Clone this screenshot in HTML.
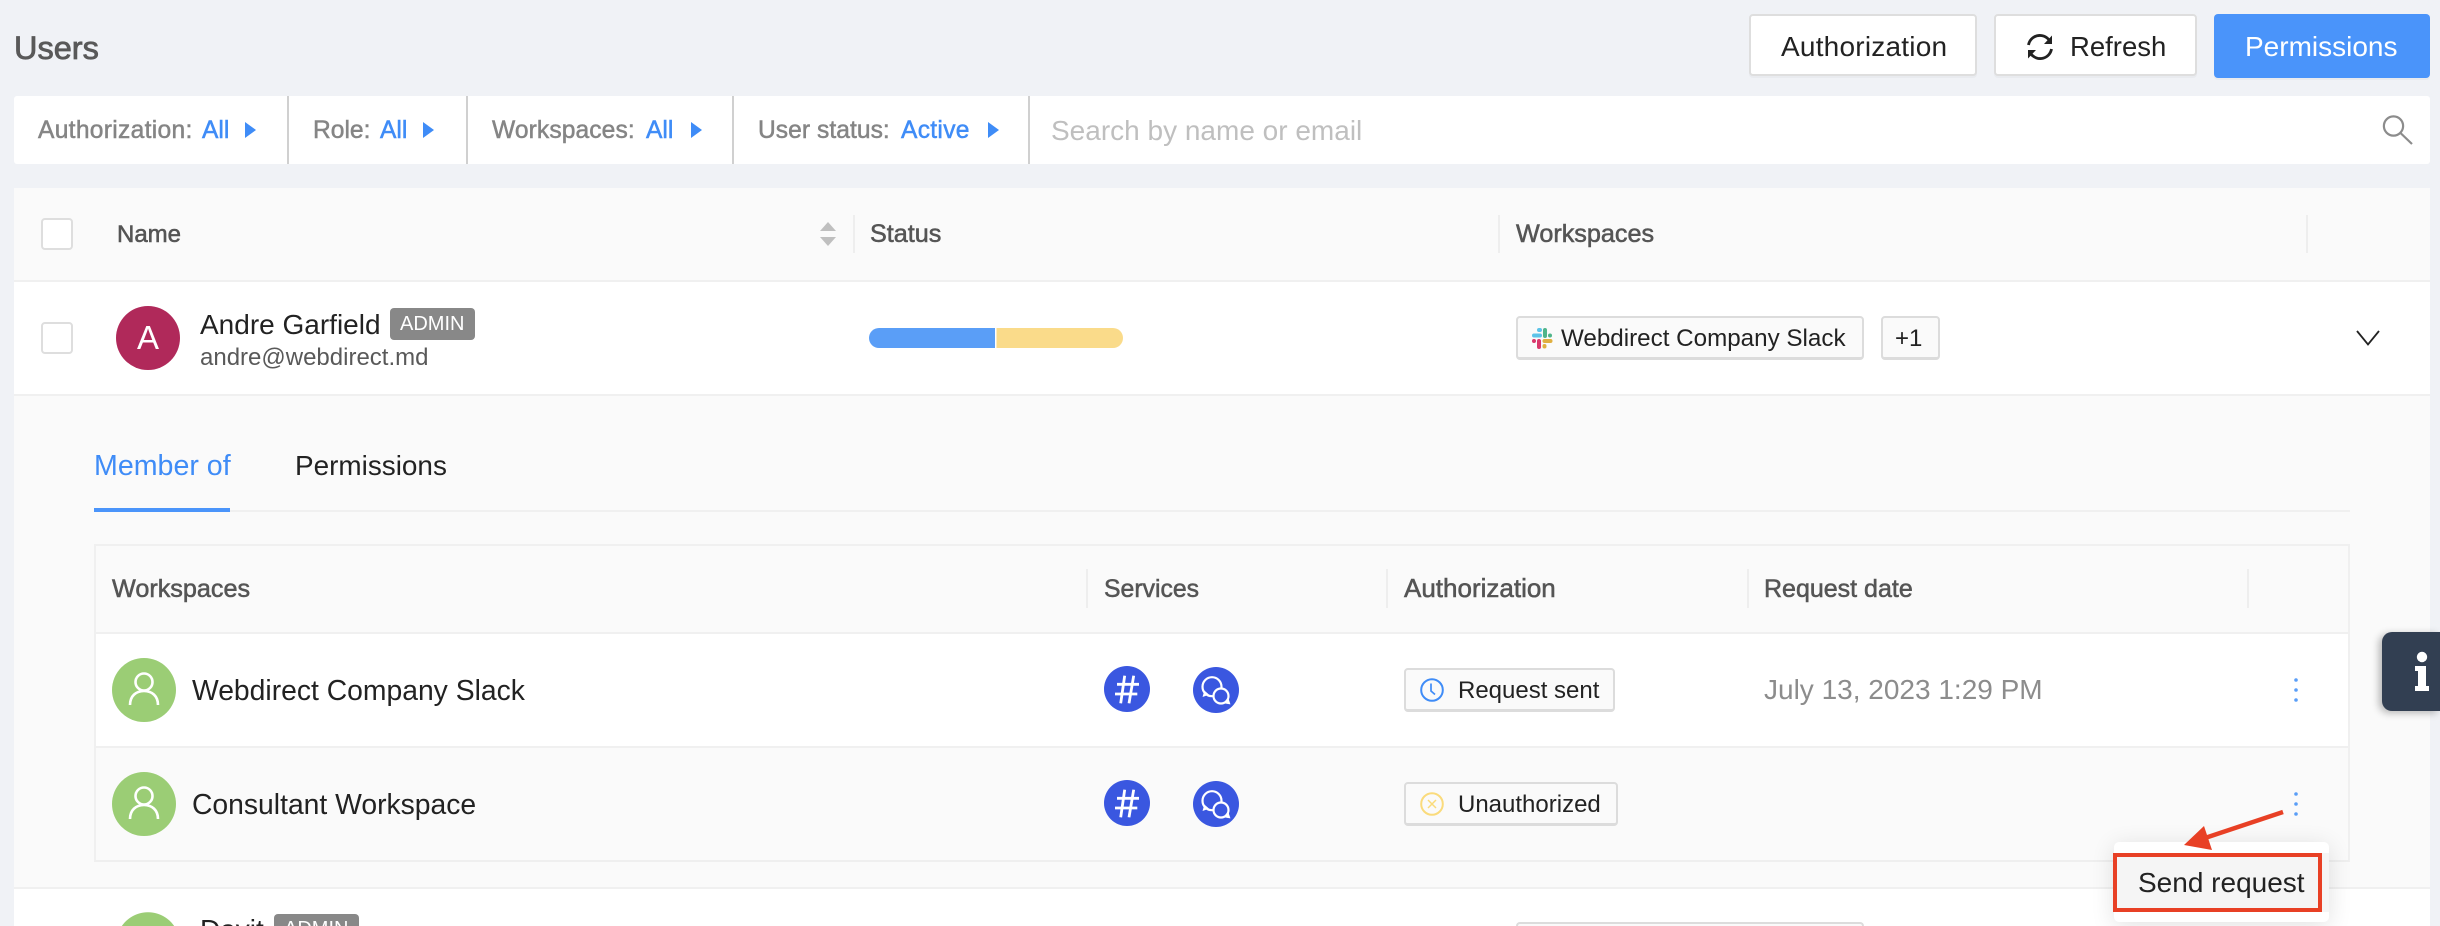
<!DOCTYPE html>
<html><head><meta charset="utf-8"><title>Users</title>
<style>
html,body{margin:0;padding:0;width:2440px;height:926px;overflow:hidden;background:#f0f2f6;font-family:"Liberation Sans",sans-serif;color:#222}
#p{position:relative;width:2440px;height:926px;overflow:hidden}
.b{position:absolute;box-sizing:border-box}
.t{position:absolute;white-space:nowrap;line-height:40px;height:40px}
.h{font-size:25px;color:#555;-webkit-text-stroke:.55px #555}
.f{font-size:24.6px;color:#858585;-webkit-text-stroke:.5px #858585;top:111px}
.v{font-size:24.6px;color:#3f8cf7;-webkit-text-stroke:.5px #3f8cf7;top:111px}
.s{position:absolute;width:2px;background:#eeeeee}
.btn{position:absolute;box-sizing:border-box;top:14px;height:62px;background:#fff;border:2px solid #dedede;border-radius:4px;box-shadow:0 2px 0 #e9ebef}
.chip{position:absolute;box-sizing:border-box;background:#fafafa;border:2px solid #dcdcdc;border-bottom-width:3px;border-radius:4px}
svg{position:absolute;overflow:visible}
</style></head><body><div id="p">

<div class="t" style="left:14px;top:28px;font-size:32.5px;color:#595959;-webkit-text-stroke:.8px #595959">Users</div>

<div class="btn" style="left:1749px;width:228px"></div>
<div class="t" style="left:1781px;top:27px;font-size:28px;letter-spacing:.22px">Authorization</div>
<div class="btn" style="left:1994px;width:203px"></div>
<svg style="left:2026px;top:33px" width="28" height="28" viewBox="0 0 28 28" fill="none" stroke="#222" stroke-width="2.8"><path d="M2.5 12A11.5 11.5 0 0 1 23 7"/><path d="M25.5 16A11.5 11.5 0 0 1 5 21"/><path d="M26 2.5v8.5h-8z" fill="#222" stroke="none"/><path d="M2 25.500v-8.500h8z" fill="#222" stroke="none"/></svg>
<div class="t" style="left:2070px;top:27px;font-size:27.5px">Refresh</div>
<div class="b" style="left:2214px;top:14px;width:216px;height:64px;background:#4a94fa;border-radius:4px;box-shadow:0 2px 0 #e9ebef"></div>
<div class="t" style="left:2245px;top:27px;font-size:28px;color:#fff">Permissions</div>

<!-- filter bar -->
<div class="b" style="left:14px;top:96px;width:2416px;height:68px;background:#fff;border-radius:3px"></div>
<div class="s" style="left:287px;top:96px;height:68px;background:#d0d0d0"></div>
<div class="s" style="left:466px;top:96px;height:68px;background:#d0d0d0"></div>
<div class="s" style="left:732px;top:96px;height:68px;background:#d0d0d0"></div>
<div class="s" style="left:1028px;top:96px;height:68px;background:#d0d0d0"></div>
<div class="t f" style="left:38px;letter-spacing:.3px">Authorization:</div><div class="t v" style="left:202px">All</div>
<svg style="left:245px;top:122px" width="11" height="16"><path d="M0 0L11 8L0 16z" fill="#3f8cf7"/></svg>
<div class="t f" style="left:313px">Role:</div><div class="t v" style="left:380px">All</div>
<svg style="left:423px;top:122px" width="11" height="16"><path d="M0 0L11 8L0 16z" fill="#3f8cf7"/></svg>
<div class="t f" style="left:492px;letter-spacing:.1px">Workspaces:</div><div class="t v" style="left:646px">All</div>
<svg style="left:691px;top:122px" width="11" height="16"><path d="M0 0L11 8L0 16z" fill="#3f8cf7"/></svg>
<div class="t f" style="left:758px;letter-spacing:.05px">User status:</div><div class="t v" style="left:901px;letter-spacing:.3px">Active</div>
<svg style="left:988px;top:122px" width="11" height="16"><path d="M0 0L11 8L0 16z" fill="#3f8cf7"/></svg>
<div class="t" style="left:1051px;top:111px;font-size:28px;color:#bfbfbf">Search by name or email</div>
<svg style="left:2382px;top:115px" width="32" height="30" fill="none" stroke="#8c8c8c" stroke-width="2.2"><circle cx="11.5" cy="11" r="9.6"/><path d="M18.500 18L30 29"/></svg>

<!-- table header -->
<div class="b" style="left:14px;top:188px;width:2416px;height:94px;background:#fafafa;border-bottom:2px solid #f0f0f0"></div>
<div class="b" style="left:41px;top:218px;width:32px;height:32px;background:#fff;border:2px solid #dedede;border-radius:4px"></div>
<div class="t h" style="left:117px;top:215px;font-size:24px">Name</div>
<svg style="left:820px;top:222px" width="16" height="24" fill="#bfbfbf"><path d="M8 0L16 9H0z"/><path d="M0 15H16L8 24z"/></svg>
<div class="s" style="left:853px;top:215px;height:38px"></div>
<div class="t h" style="left:870px;top:214px;font-size:25.2px">Status</div>
<div class="s" style="left:1498px;top:215px;height:38px"></div>
<div class="t h" style="left:1516px;top:214px;font-size:25.2px">Workspaces</div>
<div class="s" style="left:2306px;top:215px;height:38px"></div>

<!-- row 1 -->
<div class="b" style="left:14px;top:282px;width:2416px;height:114px;background:#fff;border-bottom:2px solid #f0f0f0"></div>
<div class="b" style="left:41px;top:322px;width:32px;height:32px;background:#fff;border:2px solid #dedede;border-radius:4px"></div>
<div class="b" style="left:116px;top:306px;width:64px;height:64px;border-radius:50%;background:#b0295a"></div>
<div class="t" style="left:116px;width:64px;text-align:center;top:318px;font-size:33px;color:#fff">A</div>
<div class="t" style="left:200px;top:305px;font-size:28px">Andre Garfield</div>
<div class="b" style="left:390px;top:308px;width:85px;height:32px;background:#888;border-radius:4px"></div>
<div class="t" style="left:400px;top:304px;font-size:20px;color:#fff">ADMIN</div>
<div class="t" style="left:200px;top:338px;font-size:24px;color:#595959">andre@webdirect.md</div>
<div class="b" style="left:869px;top:328px;width:254px;height:20px;border-radius:10px;background:linear-gradient(90deg,#5a9ef7 0,#5a9ef7 126px,#fff 126px,#fff 127.5px,#fadb8a 127.5px)"></div>
<div class="chip" style="left:1516px;top:316px;width:348px;height:44px"></div>
<svg style="left:1531px;top:327px" width="22" height="22" viewBox="0 0 22 22"><rect x="6" y="1" width="5" height="4" rx="2" fill="#5cc3e8"/><rect x="1" y="6.5" width="10" height="4" rx="2" fill="#5cc3e8"/><rect x="12" y="1" width="4" height="10" rx="2" fill="#4fb58a"/><rect x="17" y="6.5" width="4" height="4" rx="2" fill="#4fb58a"/><rect x="1" y="12" width="4" height="4" rx="2" fill="#d9386b"/><rect x="6" y="12" width="4" height="10" rx="2" fill="#d9386b"/><rect x="11.5" y="12" width="10" height="4" rx="2" fill="#e0b040"/><rect x="11.5" y="17" width="4" height="4.5" rx="2" fill="#e0b040"/></svg>
<div class="t" style="left:1561px;top:319px;font-size:24.2px">Webdirect Company Slack</div>
<div class="chip" style="left:1881px;top:316px;width:59px;height:44px"></div>
<div class="t" style="left:1895px;top:319px;font-size:24px">+1</div>
<svg style="left:2356px;top:330px" width="24" height="16" fill="none" stroke="#222" stroke-width="1.8"><path d="M1 1L12 14.500L23 1"/></svg>

<!-- expanded -->
<div class="b" style="left:14px;top:396px;width:2416px;height:493px;background:#fafafa;border-bottom:2px solid #f0f0f0"></div>
<div class="t" style="left:94px;top:446px;font-size:28.6px;color:#3f8cf7">Member of</div>
<div class="t" style="left:295px;top:446px;font-size:27.9px">Permissions</div>
<div class="b" style="left:94px;top:510px;width:2256px;height:2px;background:#f0f0f0"></div>
<div class="b" style="left:94px;top:508px;width:136px;height:4px;background:#4a94fa"></div>

<!-- inner table -->
<div class="b" style="left:94px;top:544px;width:2256px;height:318px;background:#fafafa;border:2px solid #f0f0f0;border-bottom:2px solid #efefef"></div>
<div class="b" style="left:96px;top:632px;width:2252px;height:2px;background:#f0f0f0"></div>
<div class="b" style="left:96px;top:634px;width:2252px;height:112px;background:#fff"></div>
<div class="b" style="left:96px;top:746px;width:2252px;height:2px;background:#f0f0f0"></div>
<div class="t h" style="left:112px;top:569px;font-size:25.2px">Workspaces</div>
<div class="s" style="left:1086px;top:569px;height:39px"></div>
<div class="t h" style="left:1104px;top:570px;font-size:24.8px">Services</div>
<div class="s" style="left:1386px;top:569px;height:39px"></div>
<div class="t h" style="left:1404px;top:568px;font-size:26px">Authorization</div>
<div class="s" style="left:1747px;top:569px;height:39px"></div>
<div class="t h" style="left:1764px;top:569px;font-size:25px">Request date</div>
<div class="s" style="left:2247px;top:569px;height:39px"></div>

<!-- inner row 1 -->
<div class="b" style="left:112px;top:658px;width:64px;height:64px;border-radius:50%;background:#9bcd75"></div>
<svg style="left:112px;top:658px" width="64" height="64" fill="none" stroke="#fff" stroke-width="2.6"><circle cx="32" cy="24" r="8.5"/><path d="M18 47C18 38 24 33 32 33S46 38 46 47"/></svg>
<div class="t" style="left:192px;top:670px;font-size:28.3px">Webdirect Company Slack</div>
<svg style="left:1104px;top:666px" width="46" height="46"><circle cx="23" cy="23" r="23" fill="#3a57e0"/><g stroke="#fff" stroke-width="2.8" fill="none"><path d="M20.700 9.700L16.700 37.300M29.700 9.700L25 37.300M13 18.300H35M11 28H33.300"/></g></svg>
<svg style="left:1193px;top:667px" width="46" height="46"><circle cx="23" cy="23" r="23" fill="#3a57e0"/><g stroke="#fff" stroke-width="2.2" fill="#3a57e0"><circle cx="19" cy="19.700" r="9.500"/><path d="M10 29.500L11.500 24L15.500 27.500z" fill="#fff" stroke-width=".6"/><circle cx="28" cy="29" r="7.500"/><path d="M37 37L35 31L31 36z" fill="#fff" stroke-width=".6"/></g></svg>
<div class="chip" style="left:1404px;top:668px;width:211px;height:44px"></div>
<svg style="left:1420px;top:678px" width="24" height="24" fill="none" stroke="#3f8cf7" stroke-width="2"><circle cx="12" cy="12" r="10.800"/><path d="M11 5.500V13L15 16.500" stroke-width="1.700"/></svg>
<div class="t" style="left:1458px;top:671px;font-size:24px">Request sent</div>
<div class="t" style="left:1764px;top:670px;font-size:28px;color:#8c8c8c">July 13, 2023 1:29 PM</div>
<svg style="left:2292px;top:676px" width="8" height="28" fill="#5a9ef7"><circle cx="4" cy="4" r="1.800"/><circle cx="4" cy="14" r="1.800"/><circle cx="4" cy="24" r="1.800"/></svg>

<!-- inner row 2 -->
<div class="b" style="left:112px;top:772px;width:64px;height:64px;border-radius:50%;background:#9bcd75"></div>
<svg style="left:112px;top:772px" width="64" height="64" fill="none" stroke="#fff" stroke-width="2.6"><circle cx="32" cy="24" r="8.5"/><path d="M18 47C18 38 24 33 32 33S46 38 46 47"/></svg>
<div class="t" style="left:192px;top:784px;font-size:28.3px">Consultant Workspace</div>
<svg style="left:1104px;top:780px" width="46" height="46"><circle cx="23" cy="23" r="23" fill="#3a57e0"/><g stroke="#fff" stroke-width="2.8" fill="none"><path d="M20.700 9.700L16.700 37.300M29.700 9.700L25 37.300M13 18.300H35M11 28H33.300"/></g></svg>
<svg style="left:1193px;top:781px" width="46" height="46"><circle cx="23" cy="23" r="23" fill="#3a57e0"/><g stroke="#fff" stroke-width="2.2" fill="#3a57e0"><circle cx="19" cy="19.700" r="9.500"/><path d="M10 29.500L11.500 24L15.500 27.500z" fill="#fff" stroke-width=".6"/><circle cx="28" cy="29" r="7.500"/><path d="M37 37L35 31L31 36z" fill="#fff" stroke-width=".6"/></g></svg>
<div class="chip" style="left:1404px;top:782px;width:214px;height:44px"></div>
<svg style="left:1420px;top:792px" width="24" height="24" fill="none" stroke="#fadb7c" stroke-width="2"><circle cx="12" cy="12" r="10.800"/><path d="M8 8L16 16M16 8L8 16" stroke-width="1.500"/></svg>
<div class="t" style="left:1458px;top:785px;font-size:24px">Unauthorized</div>
<svg style="left:2292px;top:790px" width="8" height="28" fill="#5a9ef7"><circle cx="4" cy="4" r="1.800"/><circle cx="4" cy="14" r="1.800"/><circle cx="4" cy="24" r="1.800"/></svg>

<!-- next row: cut off by the frame, boxes stop at the bottom edge -->
<div class="b" style="left:14px;top:889px;width:2416px;height:37px;background:#fff"></div>
<div class="b" style="left:116px;top:912px;width:64px;height:14px;background:radial-gradient(circle 32px at 32px 32px,#9bcd75 31.5px,rgba(155,205,117,0) 32px)"></div>
<div class="t" style="left:200px;top:918px;height:8px;line-height:24px;overflow:hidden;font-size:28px">Davit</div>
<div class="b" style="left:274px;top:914px;width:85px;height:12px;background:#888;border-radius:4px 4px 0 0"></div>
<div class="t" style="left:284px;top:921px;height:5px;line-height:16px;overflow:hidden;font-size:20px;color:#fff">ADMIN</div>
<div class="b" style="left:1516px;top:922px;width:348px;height:4px;background:#fafafa;border:2px solid #dcdcdc;border-bottom:0;border-radius:4px 4px 0 0"></div>

<!-- dropdown -->
<div class="b" style="left:2114px;top:842px;width:215px;height:80px;background:#fff;border-radius:5px;box-shadow:0 4px 24px rgba(0,0,0,.12)"></div>
<div class="b" style="left:2114px;top:853px;width:215px;height:59px;background:#f5f5f5"></div>
<div class="b" style="left:2113px;top:853px;width:209px;height:59px;border:4.5px solid #e84025"></div>
<div class="t" style="left:2138px;top:863px;font-size:28px">Send request</div>
<svg style="left:2180px;top:805px" width="110" height="50"><path d="M103 7L25 33" stroke="#e84025" stroke-width="4.5"/><path d="M4 40L24 21L32 45z" fill="#e84025"/></svg>

<!-- info button -->
<div class="b" style="left:2382px;top:632px;width:58px;height:79px;background:#323f52;border-radius:10px 0 0 10px;box-shadow:-3px 2px 8px rgba(0,0,0,.28)"></div>
<svg style="left:2414px;top:650px" width="16" height="42" fill="#fff"><circle cx="8" cy="7" r="5.200"/><path d="M1 16H12V36H15V41H1V36H4V21H1z"/></svg>

</div></body></html>
